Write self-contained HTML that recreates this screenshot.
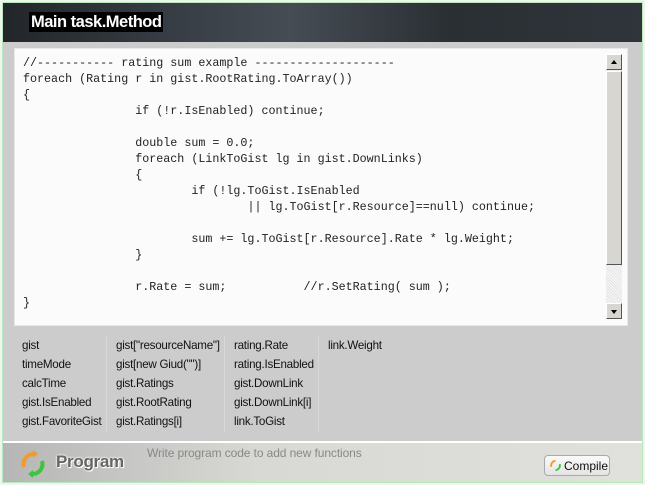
<!DOCTYPE html>
<html><head><style>
body{margin:0;width:645px;height:485px;background:#eef5ee;position:relative;overflow:hidden;font-family:"Liberation Sans",sans-serif}
#frame{position:absolute;left:2px;top:2px;width:641px;height:481px;background:#cccccc;border:1px solid #b8e8b8;box-sizing:border-box}
#hdr{position:absolute;left:3px;top:3px;width:639px;height:39px;background:linear-gradient(90deg,#22262b 0%,#3a4047 30%,#454c53 45%,#2a2f34 70%,#30353b 100%)}
#hdr span{position:absolute;left:26px;top:9px;color:#fff;font-weight:bold;font-size:16.5px;letter-spacing:-0.5px;background:#000;padding:0 2px;line-height:20px}
#code{position:absolute;left:14px;top:48px;width:614px;height:278px;background:#fbfbfb;border:1px solid #e8e8e8;box-sizing:border-box}
pre{position:absolute;left:8px;top:6px;margin:0;font-family:"Liberation Mono",monospace;font-size:11.7px;line-height:16px;color:#222;tab-size:8;-moz-tab-size:8}
#sb{position:absolute;left:606px;top:54px;width:16px;height:265px;background:repeating-linear-gradient(45deg,#e4e4e4 0 1px,#f8f8f8 1px 2px)}
.btn{position:absolute;left:0;width:16px;height:16px;background:#d8d6d0;border:1px solid;border-color:#fff #555 #555 #fff;box-sizing:border-box}
.btn:after{content:"";position:absolute;left:4px;border-left:3.5px solid transparent;border-right:3.5px solid transparent}
#up{top:0}#up:after{top:5px;border-bottom:4px solid #000}
#dn{top:249px}#dn:after{top:6px;border-top:4px solid #000}
#thumb{position:absolute;left:0;top:17px;width:16px;height:194px;background:#d8d6d0;border:1px solid;border-color:#fff #555 #555 #fff;box-sizing:border-box}
.col{position:absolute;top:336px;font-size:11.6px;line-height:19px;color:#111;padding-right:4px;border-right:1px solid #d8d8d8;height:96px;letter-spacing:-0.25px}
#bot{position:absolute;left:3px;top:441px;width:639px;height:41px;background:linear-gradient(90deg,#b6b6b6,#d8d8d4 40%,#e0e0dc);border-top:2px solid #fff;box-sizing:border-box}
#prog{position:absolute;left:56px;top:452px;font-weight:bold;font-size:17px;color:#666;letter-spacing:-0.3px;text-shadow:0 0 2px #fff,0 0 2px #fff,1px 1px 0 #fff}
#hint{position:absolute;left:147px;top:446px;font-size:12px;color:#888;letter-spacing:-0.1px}
#comp{position:absolute;left:544px;top:455px;width:66px;height:21px;border:1px solid #aaa;border-radius:4px;background:linear-gradient(#fafafa,#e4e4e4);box-sizing:border-box;font-size:12px;line-height:20px;padding-left:19px;color:#111}
</style></head><body>
<div id="frame"></div>
<div id="hdr"><span>Main task.Method</span></div>
<div id="code"><pre>//----------- rating sum example --------------------
foreach (Rating r in gist.RootRating.ToArray())
{
		if (!r.IsEnabled) continue;

		double sum = 0.0;
		foreach (LinkToGist lg in gist.DownLinks)
		{
			if (!lg.ToGist.IsEnabled
				|| lg.ToGist[r.Resource]==null) continue;

			sum += lg.ToGist[r.Resource].Rate * lg.Weight;
		}

		r.Rate = sum;		//r.SetRating( sum );
}</pre></div>
<div id="sb"><div class="btn" id="up"></div><div id="thumb"></div><div class="btn" id="dn"></div></div>
<div class="col" style="left:22px">gist<br>timeMode<br>calcTime<br>gist.IsEnabled<br>gist.FavoriteGist</div>
<div class="col" style="left:116px">gist["resourceName"]<br>gist[new Giud("")]<br>gist.Ratings<br>gist.RootRating<br>gist.Ratings[i]</div>
<div class="col" style="left:234px">rating.Rate<br>rating.IsEnabled<br>gist.DownLink<br>gist.DownLink[i]<br>link.ToGist</div>
<div class="col" style="left:328px;border:none">link.Weight</div>
<div id="bot"></div>
<svg style="position:absolute;left:19px;top:450px" width="28" height="28" viewBox="0 0 28 28">
<path d="M14 4a10 10 0 0 0-9 13" stroke="#f39a2a" stroke-width="4" fill="none"/><path d="M14 0l5 4-5 4z" fill="#f39a2a"/>
<path d="M14 24a10 10 0 0 0 9-13" stroke="#3cc43c" stroke-width="4" fill="none"/><path d="M14 28l-5-4 5-4z" fill="#3cc43c"/></svg>
<div id="prog">Program</div>
<div id="hint">Write program code to add new functions</div>
<div id="comp"><svg style="position:absolute;left:4px;top:3px" width="13" height="13" viewBox="0 0 28 28"><path d="M14 4a10 10 0 0 0-9 13" stroke="#f39a2a" stroke-width="4" fill="none"/><path d="M14 24a10 10 0 0 0 9-13" stroke="#3cc43c" stroke-width="4" fill="none"/></svg>Compile</div>
</body></html>
